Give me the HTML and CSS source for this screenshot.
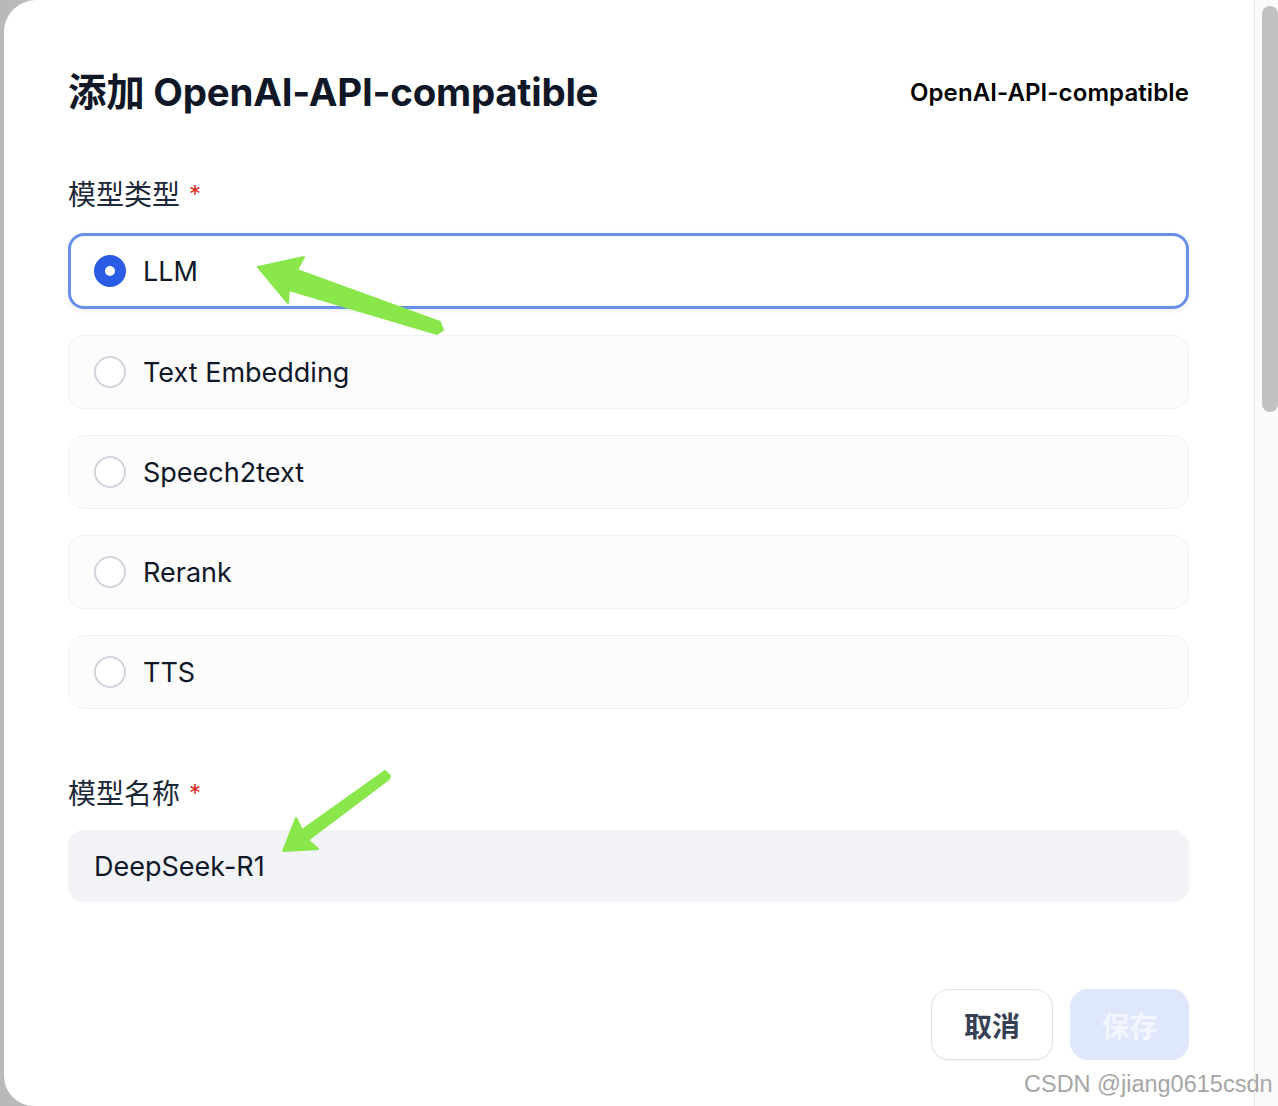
FILE: index.html
```html
<!DOCTYPE html>
<html lang="zh">
<head>
<meta charset="utf-8">
<title>添加 OpenAI-API-compatible</title>
<link rel="stylesheet" href="styles.css">
</head>
<body>
<div class="screen">
  <div class="dialog">
    <div class="header">
      <h1 class="title">添加 OpenAI-API-compatible</h1>
      <div class="provider">OpenAI-API-compatible</div>
    </div>

    <div class="field">
      <div class="label">模型类型<span class="req">*</span></div>
      <div class="options">
        <div class="option selected"><span class="radio on"></span><span class="opt-text">LLM</span></div>
        <div class="option"><span class="radio"></span><span class="opt-text">Text Embedding</span></div>
        <div class="option"><span class="radio"></span><span class="opt-text">Speech2text</span></div>
        <div class="option"><span class="radio"></span><span class="opt-text">Rerank</span></div>
        <div class="option"><span class="radio"></span><span class="opt-text">TTS</span></div>
      </div>
    </div>

    <div class="field field-name">
      <div class="label">模型名称<span class="req">*</span></div>
      <div class="input">DeepSeek-R1</div>
    </div>

    <div class="actions">
      <button class="btn btn-cancel">取消</button>
      <button class="btn btn-save">保存</button>
    </div>
  </div>
  <div class="scrollbar"><div class="thumb"></div></div>

  <svg class="arrows" width="1278" height="1106" viewBox="0 0 1278 1106">
    <polygon class="arrow" points="258,267 304,257 297,270 440,322 443,330 437,334 289,290 288,303"/>
    <polygon class="arrow" points="283,851 296,818 302,830 385,771 390,776 389,779 308,840 318,849"/>
  </svg>
  <div class="watermark">CSDN @jiang0615csdn</div>
</div>
</body>
</html>
```

FILE: styles.css
```css
* { box-sizing: border-box; }
html, body { margin: 0; padding: 0; }
body {
  background: #b9b9b9;
  font-family: Inter, "Noto Sans CJK SC", sans-serif;
  color: #101828;
  overflow: hidden;
}
.screen {
  position: relative;
  width: 1278px;
  height: 1106px;
  display: flex;
  padding-left: 4px;
}
.dialog {
  flex: 1;
  height: 1106px;
  background: #ffffff;
  border-radius: 32px 0 0 30px;
  padding: 64px 65px 0 64px;
}
.header {
  display: flex;
  justify-content: space-between;
  align-items: center;
  height: 56px;
}
.title {
  margin: 0;
  font-size: 38.5px;
  font-weight: 700;
  line-height: 56px;
  letter-spacing: -0.25px;
  color: #101828;
}
.provider {
  font-size: 24px;
  font-weight: 600;
  color: #000000;
  letter-spacing: 0.1px;
}
.field { margin-top: 55px; }
.field-name { margin-top: 65px; }
.label {
  font-size: 28px;
  line-height: 40px;
  height: 40px;
  color: #1d2939;
  font-weight: 400;
}
.req {
  color: #d92d20;
  font-size: 24px;
  vertical-align: top;
  margin-left: 9px;
}
.options {
  margin-top: 18px;
  display: flex;
  flex-direction: column;
  gap: 26px;
}
.option {
  height: 74px;
  display: flex;
  align-items: center;
  padding-left: 25px;
  background: #fcfcfd;
  border: 1px solid #f0f1f4;
  border-radius: 16px;
}
.option.selected {
  height: 76px;
  background: #ffffff;
  border: 3px solid #6890e9;
  box-shadow: 0 2px 6px rgba(16, 24, 40, 0.08);
  padding-left: 23px;
}
.radio {
  width: 32px;
  height: 32px;
  border-radius: 50%;
  border: 2px solid #d0d5dd;
  background: #ffffff;
  flex-shrink: 0;
}
.radio.on {
  border: 11px solid #2b5ce6;
}
.opt-text {
  margin-left: 17px;
  font-size: 27px;
  color: #101828;
}
.input {
  margin-top: 16px;
  height: 72px;
  background: #f2f3f6;
  border-radius: 16px;
  display: flex;
  align-items: center;
  padding-left: 26px;
  font-size: 27px;
  color: #101828;
}
.actions {
  margin-top: 87px;
  display: flex;
  justify-content: flex-end;
  gap: 17px;
}
.btn {
  height: 71px;
  border-radius: 18px;
  font-family: Inter, "Noto Sans CJK SC", sans-serif;
  font-size: 28px;
  font-weight: 700;
  padding: 0;
  cursor: pointer;
}
.btn-cancel {
  width: 122px;
  background: #ffffff;
  border: 1px solid #dcdfe4;
  color: #354052;
  box-shadow: 0 1px 2px rgba(16, 24, 40, 0.05);
}
.btn-save {
  width: 119px;
  background: #dfe7fb;
  border: none;
  color: #f3f6fe;
}
.scrollbar {
  width: 24px;
  height: 1106px;
  background: #fafafa;
  border-left: 1px solid #e8e8e8;
  padding: 6px 0 0 7px;
}
.thumb {
  width: 16px;
  height: 406px;
  background: #c1c1c1;
  border-radius: 8px;
}
.arrows {
  position: absolute;
  left: 0;
  top: 0;
  pointer-events: none;
}
.arrow {
  fill: #89e64b;
  stroke: #89e64b;
  stroke-width: 2;
  stroke-linejoin: round;
}
.watermark {
  position: absolute;
  left: 1024px;
  top: 1069px;
  font-family: "Liberation Sans", Arial, sans-serif;
  font-size: 23.5px;
  line-height: 30px;
  color: #a6a6a6;
  text-shadow: 0 0 2px #ffffff, 0 0 2px #ffffff;
  white-space: nowrap;
}
```
